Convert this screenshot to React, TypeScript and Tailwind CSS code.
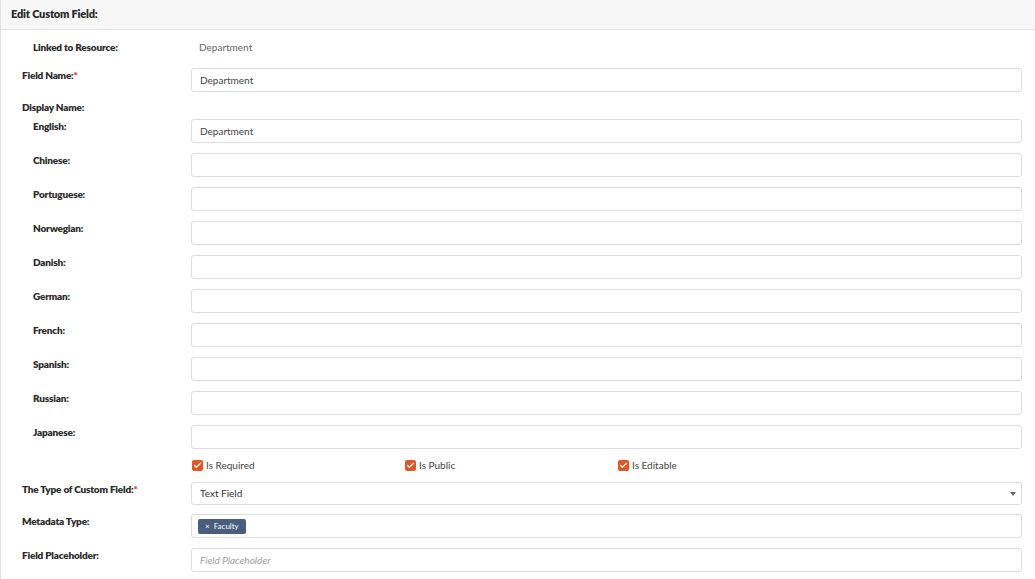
import { Check } from 'lucide-react'

const languages = ['Chinese', 'Portuguese', 'Norwegian', 'Danish', 'German', 'French', 'Spanish', 'Russian', 'Japanese']

const font = { fontFamily: 'Lato, "Open Sans", Arial, sans-serif' }

function Label({ text, sub, required }: { text: string; sub?: boolean; required?: boolean }) {
  return (
    <div className={`w-[190px] shrink-0 leading-[14px] text-[10px] font-extrabold tracking-[-0.2px] text-[#2b2b2b] ${sub ? 'pl-[32px]' : 'pl-[21px]'}`}>
      {text}
      {required && <span className="text-[#e4392b]">*</span>}
    </div>
  )
}

function Input({ value, placeholder }: { value?: string; placeholder?: string }) {
  return (
    <div className="flex-1 h-[24px] border border-[#dcdcdc] rounded-[3px] flex items-center px-[8px] text-[10px] text-[#444]">
      {value}
      {!value && placeholder && <span className="italic text-[#a0a0a0]">{placeholder}</span>}
    </div>
  )
}

function Box({ text }: { text: string }) {
  return (
    <div className="w-[213px] flex items-center gap-[3px] text-[10px] text-[#444]">
      <span className="w-[11px] h-[11px] rounded-[2px] bg-[#e4561f] flex items-center justify-center">
        <Check size={9} strokeWidth={3.5} color="#fff" />
      </span>
      {text}
    </div>
  )
}

export default function App() {
  return (
    <div className="w-full h-[579px] overflow-hidden bg-white border-l border-[#e2e2e2]" style={font}>
      <div className="h-[30px] bg-[#f7f7f7] border-b border-[#e3e3e3] flex items-center pl-[10px] text-[11px] font-extrabold tracking-[-0.2px] text-[#2b2b2b]">
        Edit Custom Field:
      </div>

      <div className="pr-[13px]">
        <div className="flex items-center h-[20px] mt-[7px]">
          <Label text="Linked to Resource:" sub />
          <div className="pl-[8px] text-[10px] text-[#666]">Department</div>
        </div>

        <div className="flex items-start mt-[11px]">
          <Label text="Field Name:" required />
          <Input value="Department" />
        </div>

        <div className="flex mt-[9px] h-[12px] items-center">
          <Label text="Display Name:" />
        </div>

        <div className="flex items-start mt-[6px]">
          <Label text="English:" sub />
          <Input value="Department" />
        </div>

        {languages.map(lang => (
          <div key={lang} className="flex items-start mt-[10px]">
            <Label text={lang + ':'} sub />
            <Input />
          </div>
        ))}

        <div className="flex items-center h-[16px] mt-[8px] pl-[191px]">
          <Box text="Is Required" />
          <Box text="Is Public" />
          <Box text="Is Editable" />
        </div>

        <div className="flex items-start mt-[9px]">
          <Label text="The Type of Custom Field:" required />
          <div className="flex-1 h-[23px] border border-[#dcdcdc] rounded-[3px] flex items-center justify-between pl-[8px] pr-[5px] text-[10px] text-[#333]">
            Text Field
            <span className="w-0 h-0 border-l-[3px] border-r-[3px] border-t-[4px] border-l-transparent border-r-transparent border-t-[#666]" />
          </div>
        </div>

        <div className="flex items-start mt-[9px]">
          <Label text="Metadata Type:" />
          <div className="flex-1 h-[24px] border border-[#dcdcdc] rounded-[3px] flex items-center px-[6px]">
            <span className="h-[15px] px-[7px] bg-[#4a5d7e] rounded-[2px] text-white text-[8px] flex items-center gap-[4px]">
              <span>×</span>Faculty
            </span>
          </div>
        </div>

        <div className="flex items-start mt-[10px]">
          <Label text="Field Placeholder:" />
          <Input placeholder="Field Placeholder" />
        </div>
      </div>
    </div>
  )
}
